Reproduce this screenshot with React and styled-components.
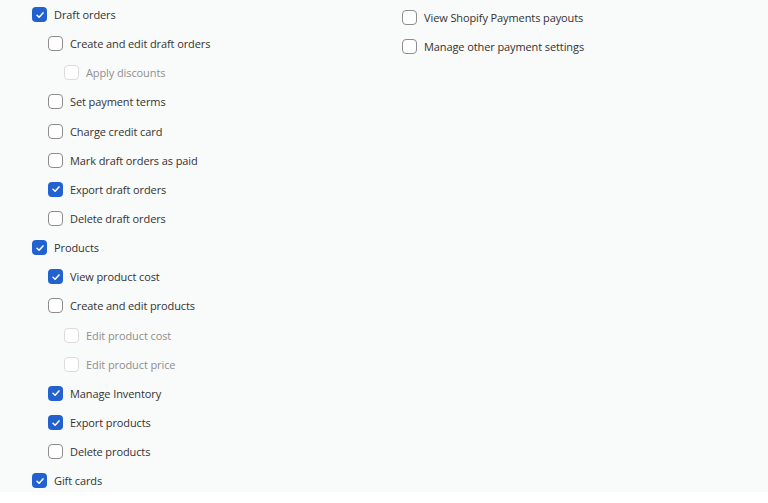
import React from 'react';
import styled, { createGlobalStyle } from 'styled-components';

const GlobalStyle = createGlobalStyle`
  body {
    margin: 0;
    background: #fff;
    font-family: "Open Sans", "Noto Sans", sans-serif;
  }
`

const leftItems = [
  { label: 'Draft orders', level: 1, checked: true },
  { label: 'Create and edit draft orders', level: 2 },
  { label: 'Apply discounts', level: 3, disabled: true },
  { label: 'Set payment terms', level: 2 },
  { label: 'Charge credit card', level: 2 },
  { label: 'Mark draft orders as paid', level: 2 },
  { label: 'Export draft orders', level: 2, checked: true },
  { label: 'Delete draft orders', level: 2 },
  { label: 'Products', level: 1, checked: true },
  { label: 'View product cost', level: 2, checked: true },
  { label: 'Create and edit products', level: 2 },
  { label: 'Edit product cost', level: 3, disabled: true },
  { label: 'Edit product price', level: 3, disabled: true },
  { label: 'Manage Inventory', level: 2, checked: true },
  { label: 'Export products', level: 2, checked: true },
  { label: 'Delete products', level: 2 },
  { label: 'Gift cards', level: 1, checked: true },
];

const rightItems = [
  { label: 'View Shopify Payments payouts', level: 1 },
  { label: 'Manage other payment settings', level: 1 },
];

const Checkbox = ({ checked, disabled }) => (
  <Box checked={checked} disabled={disabled}>
    {checked && (
      <svg width="10" height="10" viewBox="0 0 10 10">
        <path d="M2 5.2 L4.1 7.2 L8 2.9" fill="none" stroke="#fff" strokeWidth="1.5" strokeLinecap="round" strokeLinejoin="round" />
      </svg>
    )}
  </Box>
);

const Item = ({ label, level, checked, disabled }) => (
  <Row $level={level}>
    <Checkbox checked={checked} disabled={disabled} />
    <Label $disabled={disabled}>{label}</Label>
  </Row>
);

const App = () => (
  <>
    <GlobalStyle />
    <Page>
      <LeftColumn>
        {leftItems.map((it) => <Item key={it.label} {...it} />)}
      </LeftColumn>
      <RightColumn>
        {rightItems.map((it) => <Item key={it.label} {...it} />)}
      </RightColumn>
    </Page>
  </>
);

const Page = styled.div`
  display: flex;
  background: #f9fafa;
  height: 492px;
  padding-left: 32px;
  box-sizing: border-box;
  overflow: hidden;
`
const LeftColumn = styled.div`
  width: 370px;
  display: flex;
  flex-direction: column;
`
const RightColumn = styled.div`
  display: flex;
  flex-direction: column;
  padding-top: 2.5px;
`
const Row = styled.div`
  display: flex;
  align-items: center;
  height: 29.15px;
  flex-shrink: 0;
  padding-left: ${p => (p.$level - 1) * 16}px;
`
const Box = styled.span`
  width: 15px;
  height: 15px;
  box-sizing: border-box;
  border-radius: 4px;
  display: flex;
  align-items: center;
  justify-content: center;
  margin-right: 7px;
  background: ${p => (p.checked ? '#2261d0' : '#fff')};
  border: ${p => (p.checked ? 'none' : p.disabled ? '1.5px solid #dcdcdc' : '1.5px solid #8d8d8d')};
`
const Label = styled.span`
  font-size: 11px;
  letter-spacing: -0.1px;
  color: ${p => (p.$disabled ? '#8f8f8f' : '#333')};
  white-space: nowrap;
`

export default App;
